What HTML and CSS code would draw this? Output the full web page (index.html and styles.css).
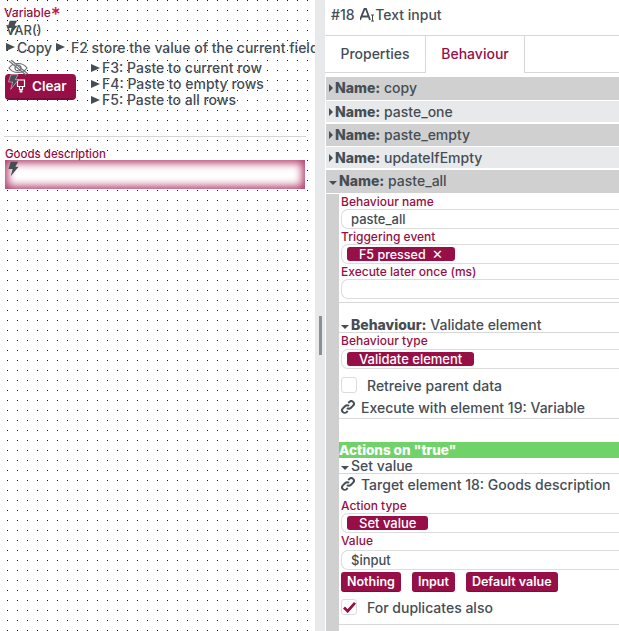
FILE: index.html
```html
<!DOCTYPE html>
<html lang="en">
<head>
  <meta charset="UTF-8" />
  <title>Text input</title>
  <link rel="stylesheet" href="styles.css">
</head>
<body>
  <svg class="defs" width="0" height="0">
    <symbol id="bolt" viewBox="0 0 12 16"><path d="M3 0h8L8 5.500h3.500L3 16l2-8H.5z"/></symbol>
    <symbol id="link" viewBox="0 0 14 14"><path d="M6 8a2.600 2.600 0 0 0 3.700 0l2.400-2.400a2.600 2.600 0 0 0-3.700-3.700L7.300 3M8 6a2.600 2.600 0 0 0-3.700 0L1.900 8.400a2.600 2.600 0 0 0 3.700 3.700L6.700 11" fill="none" stroke="#454d55" stroke-width="2"/></symbol>
  </svg>

  <div class="canvas">
    <label class="field-label">Variable<span class="star">*</span></label>
    <div class="var-name">VAR()</div>
    <div class="copy-line"><span class="arrow"></span>Copy <span class="arrow arrow-gap"></span>F2 store the value of the current field</div>
    <div class="paste-row">
      <button class="clear-btn">
        <svg class="stamp" viewBox="0 0 10 14" width="10" height="14"><path d="M1.500 1h7v6.500h-7zM3.500 7.500v3h3v-3M4.200 10.500v2.500h1.600v-2.500" fill="none" stroke="#fff" stroke-width="1.200"/></svg>
        Clear
      </button>
      <ul class="paste-list">
        <li><span class="arrow"></span>F3: Paste to current row</li>
        <li><span class="arrow"></span>F4: Paste to empty rows</li>
        <li><span class="arrow"></span>F5: Paste to all rows</li>
      </ul>
    </div>
    <hr class="canvas-rule">
    <label class="field-label goods-label">Goods description</label>
    <div class="goods-input"></div>

    <svg class="overlay bolt-var"><use href="#bolt"/></svg>
    <svg class="overlay eye" viewBox="0 0 20 16"><path d="M1 8c4-6 14-6 18 0-4 6-14 6-18 0zM1 1l17 14M3 0l17 14" fill="none" stroke="#6b7076" stroke-width="1.200"/><circle cx="10" cy="8" r="3" fill="none" stroke="#6b7076" stroke-width="1.200"/></svg>
    <svg class="overlay bolt-clear"><use href="#bolt"/></svg>
    <svg class="overlay bolt-goods"><use href="#bolt"/></svg>
  </div>

  <div class="gutter"><div class="handle"></div></div>

  <div class="panel">
    <div class="panel-title">#18 <svg class="type-icon" viewBox="0 0 15 14" width="15" height="14"><path d="M0 12 4.500 1h1.500l4 11M2 8.500h6.500" fill="none" stroke="#454d55" stroke-width="1.800"/><path d="M11 7h3M12.500 7v6M11 13h3" fill="none" stroke="#454d55"/></svg>Text input</div>
    <div class="tabs">
      <div class="tab">Properties</div>
      <div class="tab active">Behaviour</div>
    </div>

    <div class="row dark"><span class="tri-right"></span><b>Name:</b> copy</div>
    <div class="row light"><span class="tri-right"></span><b>Name:</b> paste_one</div>
    <div class="row dark"><span class="tri-right"></span><b>Name:</b> paste_empty</div>
    <div class="row light"><span class="tri-right"></span><b>Name:</b> updateIfEmpty</div>
    <div class="row dark open"><span class="tri-down"></span><b>Name:</b> paste_all</div>

    <div class="detail">
      <label class="label first">Behaviour name</label>
      <div class="input">paste_all</div>
      <label class="label">Triggering event</label>
      <div class="input"><span class="chip chip-event">F5 pressed <i class="chip-x">✕</i></span></div>
      <label class="label">Execute later once (ms)</label>
      <div class="input"></div>
      <hr class="rule">

      <div class="sub-head behaviour-head"><span class="tri-down"></span><b>Behaviour:</b> Validate element</div>
      <label class="label tall">Behaviour type</label>
      <div class="input"><span class="chip">Validate element</span></div>
      <div class="check-row"><span class="check"></span>Retreive parent data</div>
      <div class="link-row"><svg class="link-icon"><use href="#link"/></svg>Execute with element 19: Variable</div>

      <div class="actions-bar">Actions on "true"</div>
      <div class="sub-head"><span class="tri-down"></span>Set value</div>
      <div class="link-row target"><svg class="link-icon"><use href="#link"/></svg>Target element 18: Goods description</div>
      <label class="label">Action type</label>
      <div class="input"><span class="chip">Set value</span></div>
      <label class="label tall-value">Value</label>
      <div class="input">$input</div>
      <div class="btn-row">
        <button class="small-btn">Nothing</button>
        <button class="small-btn">Input</button>
        <button class="small-btn">Default value</button>
      </div>
      <div class="check-row dup"><span class="check"><svg viewBox="0 0 14 12" width="13" height="11"><path d="M1 6l4 4 8-9" fill="none" stroke="#960f46" stroke-width="3"/></svg></span>For duplicates also</div>
      <hr class="rule last">
    </div>
  </div>
</body>
</html>
```

FILE: styles.css
```css
* {
  box-sizing: border-box;
}

html, body {
  height: 100%;
}

body {
  margin: 0;
  display: flex;
  overflow: hidden;
  font-family: 'Inter', 'DejaVu Sans', sans-serif;
  font-size: 14px;
  font-weight: 500;
  color: #454d55;
  background: #fff;
}

.defs {
  position: absolute;
}

/* left side, dotted canvas */
.canvas {
  position: relative;
  width: 315px;
  flex-shrink: 0;
  padding: 6px 0 0 4px;
  overflow: hidden;
  white-space: nowrap;
  background-image: radial-gradient(circle at 7.500px 0.500px, #111 0.900px, transparent 0.900px);
  background-size: 10px 10px;
}

.field-label {
  display: block;
  font-size: 12px;
  line-height: 14px;
  color: #960f46;
}

.star {
  font-size: 19px;
  line-height: 10px;
  vertical-align: -4px;
  color: #c9184a;
}

.var-name {
  height: 18px;
  margin-top: 1px;
  padding-left: 2px;
  font-size: 13px;
  line-height: 18px;
}

.copy-line {
  display: flex;
  align-items: center;
  height: 18px;
  margin-top: -1px;
  padding-left: 2px;
  white-space: pre;
}

.arrow {
  display: inline-block;
  width: 0;
  height: 0;
  margin-right: 2px;
  border-left: 9px solid #454d55;
  border-top: 4.500px solid transparent;
  border-bottom: 4.500px solid transparent;
}

.arrow-gap {
  margin-right: 6px;
}

.paste-row {
  display: flex;
  height: 57px;
  margin-top: 4px;
}

.clear-btn {
  display: flex;
  align-items: center;
  gap: 6px;
  width: 71px;
  height: 26px;
  margin: 14px 0 0 1px;
  padding: 0 0 0 11px;
  border: none;
  border-bottom: 2px solid #7c0c3a;
  border-radius: 4px;
  background: #960f46;
  color: #fff;
  font: 600 13.500px 'Inter', 'DejaVu Sans', sans-serif;
}

.paste-list {
  margin: 0 0 0 15px;
  padding: 0;
  list-style: none;
  line-height: 16px;
}

.paste-list li {
  display: flex;
  align-items: center;
}

.canvas-rule {
  width: 302px;
  height: 1px;
  margin: 19px 0 0;
  border: none;
  background: #d4d4d4;
}

.goods-label {
  margin: 10px 0 -1px 1px;
  font-size: 11.500px;
}

.goods-input {
  width: 300px;
  height: 29px;
  margin: 0 0 0 1px;
  background: #fff;
  box-shadow: inset 0 0 8px 3px #b03a6a;
}

.overlay {
  position: absolute;
  fill: #454d55;
}

.bolt-var {
  left: 7px;
  top: 20px;
  width: 11px;
  height: 16px;
}

.eye {
  left: 8px;
  top: 60px;
  width: 20px;
  height: 16px;
}

.bolt-clear {
  left: 8px;
  top: 74px;
  width: 11px;
  height: 16px;
  stroke: #e6dfe3;
  stroke-width: 0.600px;
}

.bolt-goods {
  left: 8px;
  top: 161px;
  width: 11px;
  height: 16px;
}

.gutter {
  position: relative;
  width: 10px;
  flex-shrink: 0;
  background: #e8e9ea;
}

.handle {
  position: absolute;
  left: 4px;
  top: 316px;
  width: 3px;
  height: 39px;
  background: #8a8f94;
}

/* right side, properties panel */
.panel {
  flex: 1;
  min-width: 0;
  white-space: nowrap;
  overflow: hidden;
}

.panel-title {
  display: flex;
  align-items: center;
  white-space: pre;
  height: 36px;
  padding: 0 0 6px 6px;
  border-bottom: 1px solid #d8d8d8;
}

.type-icon {
  margin-left: 2px;
}

.tabs {
  display: flex;
  height: 37px;
  border-bottom: 1px solid #d8d8d8;
  margin-bottom: 4px;
}

.tab {
  width: 100px;
  margin-bottom: -1px;
  line-height: 36px;
  text-align: center;
}

.tab.active {
  background: #fff;
  border-left: 1px solid #d8d8d8;
  border-right: 1px solid #d8d8d8;
  color: #960f46;
}

.row {
  height: 22.500px;
  margin-left: 1px;
  margin-bottom: 1px;
  padding-left: 3px;
  line-height: 22px;
}

.row.dark {
  background: #d0d0d0;
}

.row.light {
  height: 21px;
  margin-bottom: 2px;
  background: #e8e9ea;
}

.row.open {
  height: 23px;
  margin-bottom: 0;
}

.row b {
  font-weight: 800;
}

.tri-right,
.tri-down {
  display: inline-block;
  width: 0;
  height: 0;
  vertical-align: 1px;
}

.tri-right {
  margin-right: 2px;
  border-left: 4px solid #454d55;
  border-top: 4px solid transparent;
  border-bottom: 4px solid transparent;
}

.tri-down {
  margin-right: 2px;
  border-top: 4px solid #454d55;
  border-left: 4px solid transparent;
  border-right: 4px solid transparent;
}

.detail {
  height: 440px;
  margin-left: 1px;
  background: #fff;
  border-left: 13px solid #d0d0d0;
}

.label {
  display: block;
  height: 15px;
  margin-left: 2px;
  font-size: 12px;
  line-height: 15px;
  color: #960f46;
}

.label.first {
  margin-top: 1px;
}

.label.tall {
  height: 16px;
}

.label.tall-value {
  height: 17px;
}

.input {
  display: flex;
  align-items: center;
  height: 20px;
  margin-left: 2px;
  padding-left: 5px;
  border: 1px solid #dcdcdc;
  border-right: none;
  border-radius: 7px 0 0 7px;
  font-size: 13px;
}

.input:not(:has(.chip)) {
  padding-left: 9px;
}

.chip {
  height: 14px;
  padding: 0 12px;
  border-radius: 3px;
  background: #960f46;
  color: #fff;
  font-size: 13px;
  line-height: 14px;
}

.chip-event {
  font-size: 12.500px;
}

.chip-x {
  margin-left: 3px;
  font-style: normal;
  font-size: 13px;
}

.rule {
  height: 1px;
  margin: 3px 0 0;
  border: none;
  background: #d8d8d8;
}

.sub-head {
  height: 16px;
  padding-left: 2px;
  border-bottom: 1px solid #d8d8d8;
  line-height: 15px;
}

.behaviour-head {
  height: 30px;
  padding-top: 14px;
}

.behaviour-head b {
  font-weight: 800;
}

.check-row {
  display: flex;
  align-items: center;
  height: 16px;
  margin: 8px 0 0 2px;
}

.check-row.dup {
  margin-top: 7px;
}

.check {
  display: flex;
  align-items: center;
  justify-content: center;
  width: 16px;
  height: 16px;
  margin-right: 10px;
  border: 1px solid #dcdcdc;
  border-radius: 3px;
}

.link-row {
  display: flex;
  align-items: center;
  height: 23px;
  margin-top: 3px;
  padding-left: 2px;
  border-bottom: 1px solid #d8d8d8;
}

.link-icon {
  width: 14px;
  height: 14px;
  margin-right: 6px;
}

.actions-bar {
  height: 16px;
  margin-top: 23px;
  background: #6fd36a;
  color: #fff;
  font-size: 13.500px;
  font-weight: 800;
  line-height: 16px;
}

.link-row.target {
  height: 23px;
  margin-top: 0;
  padding-bottom: 3px;
  border-bottom: none;
}

.target + .label {
  margin-top: 1px;
}

.btn-row {
  display: flex;
  gap: 11px;
  margin: 2px 0 0 2px;
}

.small-btn {
  height: 20px;
  padding: 0 6px;
  border: none;
  border-bottom: 1px solid #7c0c3a;
  border-radius: 3px;
  background: #960f46;
  color: #fff;
  font: 600 12.500px 'Inter', 'DejaVu Sans', sans-serif;
}

.rule.last {
  margin-top: 9px;
}
```
